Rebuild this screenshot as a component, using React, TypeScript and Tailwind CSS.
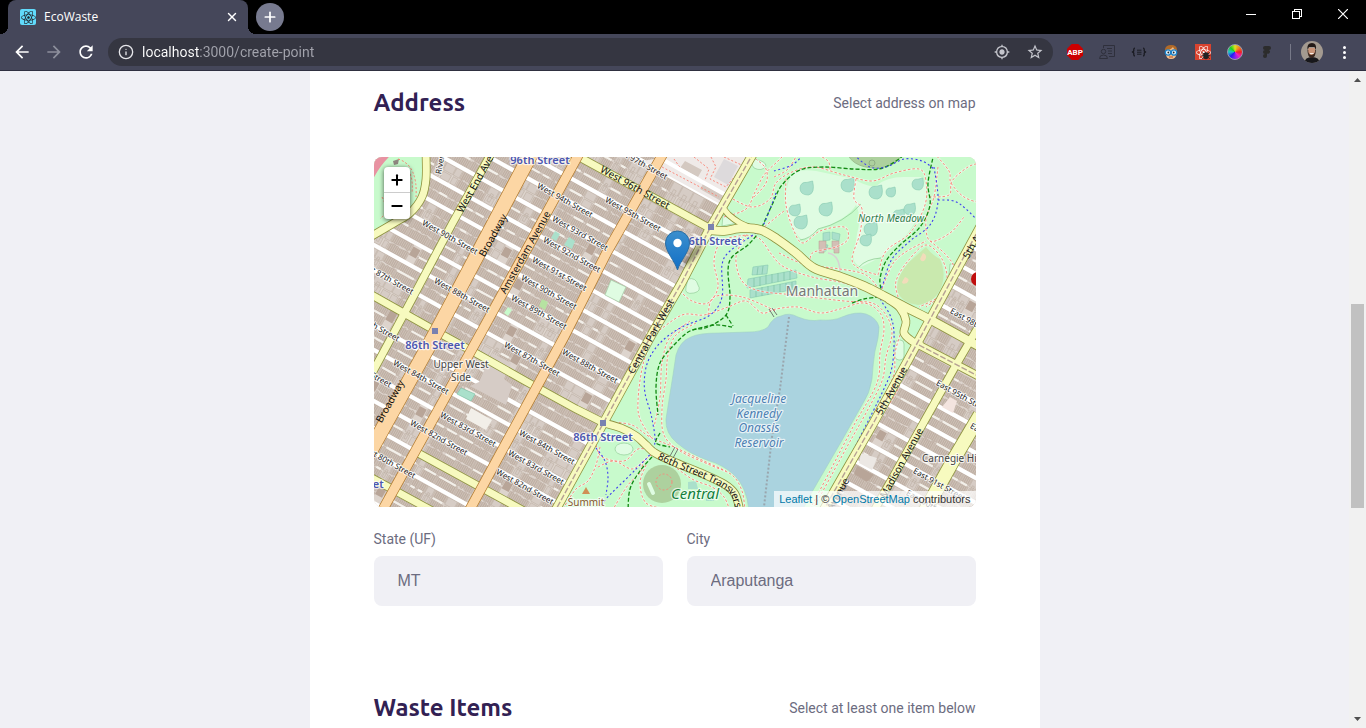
import React from "react";
import { Info, Minus, Plus, X } from "lucide-react";
import { FaReact } from "react-icons/fa";
import { MdOutlineMyLocation, MdRefresh, MdStarBorder, MdArrowBack, MdArrowForward } from "react-icons/md";

type Pt = [number, number];

const SLOPE = 0.555;
const ANGLE = (Math.atan(SLOPE) * 180) / Math.PI;
const COS = Math.cos(Math.atan(SLOPE));
const SIN = Math.sin(Math.atan(SLOPE));

/* Vertical offset of every cross street where it meets the left edge. */
const STREETS = [
  -367, -342, -317, -292, -267, -242, -217, -192, -167, -145, -112, -88, -64, -38, -13, 12, 37, 63, 88, 113, 139, 168,
  193, 219, 244, 271, 296, 321, 346,
];

const parkWest = (y: number) => 378 - y * 0.56;
const parkEast = (y: number) => 646 - y * 0.563;

function buildCity() {
  let seed = 17;
  const rnd = () => {
    seed = (seed * 16807) % 2147483647;
    return seed / 2147483647;
  };
  let houses = "";
  let terraces = "";
  let yards = "";
  let dark = "";
  for (let i = 0; i < STREETS.length; i++) {
    const b = STREETS[i];
    const next = STREETS[i + 1] ?? b + 25;
    const depth = (next - b) * COS;
    const quad = (t: number, v: number, w: number, h: number) => {
      const p = (a: number, c: number) =>
        (a * COS - c * SIN).toFixed(1) + " " + (b + a * SIN + c * COS).toFixed(1);
      return `M${p(t, v)}L${p(t + w, v)}L${p(t + w, v + h)}L${p(t, v + h)}Z`;
    };
    const from = Math.max(-10, (-b - 30) / SIN);
    const to = Math.min(720, (356 - b) / SIN);
    let t = from;
    while (t < to) {
      const x = t * COS;
      const y = b + t * SIN;
      if (x > parkWest(y) + 6 && x < parkEast(y) - 20) {
        t += 4;
        continue;
      }
      const kind = rnd();
      const half = (depth - 5) / 2;
      if (kind < 0.66) {
        const n = 4 + Math.floor(rnd() * 8);
        for (let k = 0; k < n; k++) {
          const d1 = half - 0.2 - rnd() * 1.6;
          const d2 = half - 0.2 - rnd() * 1.6;
          terraces += quad(t + k * 2, 2.5, 2, d1);
          terraces += quad(t + k * 2, depth - 2.5 - d2, 2, d2);
        }
        if (rnd() > 0.5) yards += quad(t + 1, 2.5 + half - 1.2, n * 2 - 3, 2.2);
        t += n * 2 + 0.6;
      } else if (kind < 0.96) {
        const w = 5 + rnd() * 7;
        houses += quad(t, 2.5, w, half - 0.4);
        houses += quad(t + 1, depth - 2.5 - half + 1, w - 1.4, half - 1);
        if (rnd() > 0.5) houses += quad(t + w * 0.35, 5 + half * 0.4, w * 0.3, half);
        t += w + 0.8;
      } else {
        dark += quad(t, 4, 8, half + 1);
        t += 9;
      }
    }
  }
  return { houses, terraces, yards, dark };
}

const city = buildCity();

const line = (pts: Pt[]) => "M" + pts.map((p) => p.join(" ")).join("L");

function curve(pts: Pt[]) {
  let d = `M${pts[0][0]} ${pts[0][1]}`;
  for (let i = 0; i < pts.length - 1; i++) {
    const p0 = pts[Math.max(0, i - 1)];
    const p1 = pts[i];
    const p2 = pts[i + 1];
    const p3 = pts[Math.min(pts.length - 1, i + 2)];
    const c = [p1[0] + (p2[0] - p0[0]) / 6, p1[1] + (p2[1] - p0[1]) / 6, p2[0] - (p3[0] - p1[0]) / 6, p2[1] - (p3[1] - p1[1]) / 6];
    d += `C${c.map((n) => n.toFixed(1)).join(" ")} ${p2[0]} ${p2[1]}`;
  }
  return d;
}

const transverse97 = curve([[335, 73], [350, 74], [368, 71], [387, 73], [403, 82], [422, 96], [440, 111], [467, 120], [490, 129], [510, 139], [533, 151], [557, 163], [606, 190]]);
const spur97 = curve([[347, 48], [355, 58], [366, 66], [378, 71]]);
const spur96 = curve([[514, 142], [526, 151], [532, 164], [530, 176], [538, 184], [548, 189]]);
const street86: Pt[] = [[-4, 137], [67, 177], [107, 199], [153, 225], [202, 252], [230, 266]];
const transverse86 = curve([[230, 266], [247, 271], [262, 279], [272, 288], [281, 296], [300, 305], [327, 316], [350, 327], [361, 337], [366, 354]]);

const YELLOW = [
  { d: curve([[52, -4], [52, 22], [48, 40], [36, 56], [20, 66], [-4, 80]]), w: 7 },
  { d: line([[118, -5], [78, 67], [30, 157], [-4, 220]]), w: 7 },
  { d: line([[196, -5], [337, 72]]), w: 7 },
  { d: line(street86), w: 7 },
  { d: transverse86, w: 7 },
  { d: line([[44, 296], [150, 354]]), w: 7 },
  { d: line([[-4, 320], [62, 356]]), w: 7 },
  { d: transverse97, w: 8 },
  { d: spur97, w: 5 },
  { d: spur96, w: 7 },
  { d: line([[545, 188], [606, 220]]), w: 7 },
  { d: line([[380, -5], [335, 73], [307, 127], [278, 177], [230, 265], [180, 356]]), w: 8 },
  { d: line([[606, 70], [553, 168], [533, 205], [500, 265], [473, 312], [449, 354]]), w: 8 },
  { d: line([[606, 167], [582, 208], [533, 295], [500, 354]]), w: 7 },
  { d: line([[606, 258], [580, 302], [551, 354]]), w: 13 },
];

const ORANGE = [
  { d: line([[158, -5], [64, 172], [-6, 298]]), w: 14 },
  { d: line([[206, -5], [108, 174], [8, 354]]), w: 9 },
  { d: line([[290, -5], [233, 95], [190, 180], [95, 354]]), w: 9 },
];

const RAIL = [
  line([[380, -5], [335, 73], [307, 127], [278, 177], [230, 265], [180, 356]]),
  line([[606, 70], [553, 168], [533, 205], [500, 265], [473, 312], [449, 354]]),
  line([[545, 188], [606, 220]]),
];

const FOOTPATHS: Pt[][] = [
  [[350, 60], [372, 52], [381, 35], [390, 18], [404, 4], [412, -4]],
  [[355, 40], [378, 50], [396, 42], [402, 26], [418, 15], [440, 10], [470, 18], [498, 24], [520, 16], [545, 12], [552, 24], [551, 48], [536, 76], [512, 94], [504, 118]],
  [[412, 22], [412, 48], [420, 74], [429, 86], [446, 74], [470, 70], [474, 82], [462, 90], [440, 95], [436, 102]],
  [[482, 22], [480, 42], [488, 52], [486, 76], [478, 102], [486, 112], [504, 118]],
  [[405, 96], [430, 107], [466, 112], [492, 118], [506, 134]],
  [[560, -4], [575, 14], [577, 26], [590, 40], [606, 46]],
  [[555, 40], [575, 38], [578, 24], [594, 10], [606, 6]],
  [[564, 10], [560, 40], [552, 62], [556, 84], [576, 76], [590, 60]],
  [[556, 84], [572, 98], [580, 112], [572, 134], [552, 150]],
  [[508, 132], [518, 108], [530, 96], [552, 84]],
  [[524, 140], [522, 124], [534, 104], [552, 88], [568, 102], [573, 124], [564, 140], [545, 150]],
  [[306, 134], [318, 144], [334, 146], [344, 130], [340, 104], [348, 84], [372, 78]],
  [[372, 78], [386, 82], [398, 98], [410, 110], [438, 120], [470, 126], [502, 138]],
  [[372, 78], [362, 100], [368, 124], [386, 134], [420, 138], [470, 144], [498, 146], [512, 158], [518, 176], [512, 200], [508, 224], [492, 256], [474, 288], [450, 332], [438, 354]],
  [[282, 176], [308, 158], [330, 158], [354, 150], [372, 144], [388, 156], [402, 152], [424, 150], [446, 156], [466, 152], [490, 146], [506, 156], [510, 172], [506, 196], [503, 226], [480, 268], [456, 314], [436, 352]],
  [[322, 166], [302, 178], [294, 198], [292, 222], [288, 252], [290, 278], [306, 294], [336, 308], [358, 318], [368, 334], [371, 354]],
  [[316, 164], [296, 180], [288, 206], [286, 240], [280, 270]],
  [[290, 165], [276, 188], [268, 212], [264, 244], [266, 262], [278, 282]],
  [[236, 265], [258, 268], [276, 280], [300, 290], [330, 304], [352, 314]],
  [[222, 288], [228, 300], [250, 304], [264, 292], [278, 294]],
  [[226, 290], [222, 308], [214, 324], [202, 332], [190, 350]],
  [[224, 310], [240, 304], [258, 312], [272, 302]],
  [[238, 354], [254, 328], [266, 316], [270, 304], [280, 296]],
  [[272, 308], [266, 326], [272, 346], [292, 352]],
  [[296, 306], [318, 322], [338, 330], [350, 340], [356, 354]],
  [[540, 196], [530, 210], [524, 232], [506, 262], [474, 316], [452, 352]],
  [[526, 178], [521, 196], [519, 220], [500, 256]],
  [[400, 20], [414, 12], [424, -4]],
  [[440, -4], [454, 4], [456, 14]],
  [[380, 40], [392, 26], [392, 12], [382, 2]],
  [[410, 54], [400, 62], [390, 70]],
  [[334, 158], [340, 140], [368, 140], [402, 154]],
];

const BRIDLE: Pt[][] = [
  [[388, 70], [398, 48], [408, 28], [426, 13], [450, 10], [480, 12], [505, 12], [522, 4], [532, -4]],
  [[560, -4], [554, 26], [556, 48], [546, 70], [526, 88], [512, 104], [506, 122], [508, 136]],
  [[386, 74], [374, 88], [358, 100], [354, 114], [356, 140], [352, 158], [334, 170], [316, 174], [300, 188], [286, 206], [282, 230], [284, 258]],
  [[478, 146], [490, 142], [504, 140]],
  [[352, 158], [359, 169]],
  [[358, 170], [340, 168], [318, 173]],
  [[286, 276], [282, 286], [296, 290]],
  [[278, 300], [266, 314], [256, 332], [254, 354]],
];

const BIKE: Pt[][] = [
  [[402, 36], [396, 52], [388, 70], [376, 80], [356, 94], [348, 108], [348, 140], [336, 158], [308, 170], [288, 184], [276, 200], [271, 216], [271, 236], [278, 262], [280, 290], [262, 312], [232, 342], [226, 354]],
  [[560, 10], [564, 44], [556, 68], [536, 84], [518, 102], [510, 124], [506, 140], [516, 158], [520, 176], [518, 210], [508, 236], [486, 280], [456, 340], [448, 354]],
  [[480, -2], [496, 10], [512, 10], [530, 2], [548, 4], [560, 12]],
  [[564, 43], [580, 44], [592, 52], [606, 66]],
  [[400, 14], [418, 8], [430, -3]],
  [[222, 291], [231, 304], [234, 320], [232, 338]],
];

const LAKE =
  "M317 180Q325 176 345 176L374 175Q388 175 394 170Q399 160 407 159Q415 155 424 160Q436 165 446 163Q460 164 468 160Q482 154 492 157Q503 161 505 170Q505 180 501 194Q499 206 498 222Q496 236 488 248L467 285L438 335L428 354H375Q373 330 360 318Q350 308 333 303Q316 297 303 286Q291 276 292 262L299 218L302 198Q306 184 317 180Z";

const PONDS: [number, number, number][] = [
  [433, 31, 7], [474, 28, 7], [502, 35, 7], [517, 35, 5], [544, 27, 6], [452, 52, 7], [421, 53, 6], [427, 65, 7], [497, 72, 7], [492, 83, 6], [525, 58, 6], [536, 52, 6],
];

type Label = { t: string; x: number; y: number; end?: boolean };

const STREET_LABELS: Label[] = [
  { t: "West 97th Street", x: 293, y: 20, end: true },
  { t: "West 95th Street", x: 232, y: 42 },
  { t: "West 94th Street", x: 164, y: 28 },
  { t: "West 93rd Street", x: 179, y: 61 },
  { t: "West 92nd Street", x: 170, y: 82 },
  { t: "West 91st Street", x: 159, y: 102 },
  { t: "West 90th Street", x: 148, y: 120 },
  { t: "West 90th Street", x: 49, y: 65 },
  { t: "West 89th Street", x: 138, y: 140 },
  { t: "West 88th Street", x: 61, y: 123 },
  { t: "West 87th Street", x: 39, y: 135, end: true },
  { t: "West 85th Street", x: 25, y: 182, end: true },
  { t: "West 84th Street", x: 20, y: 205 },
  { t: "West 83rd Street", x: 17, y: 228, end: true },
  { t: "West 83rd Street", x: 67, y: 257 },
  { t: "West 82nd Street", x: 37, y: 265 },
  { t: "West 80th Street", x: 41, y: 319, end: true },
  { t: "West 87th Street", x: 131, y: 187 },
  { t: "West 88th Street", x: 189, y: 194 },
  { t: "West 84th Street", x: 146, y: 275 },
  { t: "West 83rd Street", x: 135, y: 295 },
  { t: "West 82nd Street", x: 123, y: 314 },
  { t: "East 98th Street", x: 577, y: 153 },
  { t: "East 95th Street", x: 563, y: 225 },
  { t: "East 93rd Street", x: 597, y: 268 },
  { t: "East 91st Street", x: 540, y: 313 },
  { t: "East 90th Street", x: 533, y: 335 },
];

const AVENUE_LABELS: Label[] = [
  { t: "West End Avenue", x: 86, y: 55 },
  { t: "Broadway", x: 108, y: 99 },
  { t: "Amsterdam Avenue", x: 129, y: 136 },
  { t: "Central Park West", x: 257, y: 216 },
  { t: "Broadway", x: 5, y: 265 },
  { t: "5th Avenue", x: 592, y: 101 },
  { t: "5th Avenue", x: 505, y: 257 },
  { t: "5th Avenue", x: 473, y: 322, end: true },
  { t: "Madison Avenue", x: 547, y: 272, end: true },
];

function CityMap() {
  return (
    <svg
      viewBox="0 0 602 350"
      preserveAspectRatio="xMidYMid slice"
      className="block h-full w-full font-['Noto_Sans',sans-serif]"
      role="img"
      aria-label="Street map of the Upper West Side and Central Park"
    >
      <defs>
        <filter id="pin-shadow" x="-50%" y="-50%" width="200%" height="200%">
          <feGaussianBlur stdDeviation="2" />
        </filter>
        <linearGradient id="pin" x1="0" y1="0" x2="0" y2="1">
          <stop offset="0" stopColor="#3b8fcd" />
          <stop offset="1" stopColor="#126fc6" />
        </linearGradient>
        <path id="transverse-86" d={transverse86} />
      </defs>
      <rect width="602" height="350" fill="#ddd4cd" />
      <path d={city.terraces} fill="#cdc0b6" stroke="#b8a99c" strokeWidth="0.5" />
      <path d={city.houses} fill="#d6ccc5" stroke="#bcaea2" strokeWidth="0.6" />
      <path d={city.yards} fill="#f2efe9" />
      <path d={city.dark} fill="#b8a598" />
      <g stroke="#ffffff" strokeWidth="4">
        {STREETS.filter((b) => ![-112, 139, 321].includes(b)).map((b) => (
          <path key={b} d={`M-5 ${b - 5 * SLOPE}L610 ${b + 610 * SLOPE}`} />
        ))}
      </g>

      {/* open ground north of 96th Street */}
      <path d="M292 0H375L346 47L268 4Z" fill="#efeae8" />
      <path d="M350 2L364 9L354 28L340 20Z" fill="#dddadc" />
      <path d="M311 4L328 13L324 20L306 11ZM329 27L350 38L347 44L326 32Z" fill="#d4c9c1" />
      <g fill="none" stroke="#fa8072" strokeWidth="0.9" strokeDasharray="2 2">
        <path d="M288 10L345 40M320 0L335 12L330 26M337 0L342 10L336 22L352 30L370 8M300 2L310 16L330 24M350 0L372 10" />
      </g>
      <path d="M263 -12L300 9L350 37" fill="none" stroke="#ffffff" strokeWidth="4" />

      {/* small plots inside the blocks */}
      <path d="M105 225L118 196L137 206L130 222L138 228L132 248L96 229Z" fill="#d6ccc6" />
      <path d="M97 251L118 263L112 273L92 262Z" fill="#f2efe9" />
      <path d="M87 231L101 237L97 244L83 237Z" fill="#aae0cb" stroke="#7cc4aa" strokeWidth="0.6" />
      <path d="M181 74L186 77L182 84L177 81ZM195 80L201 84L198 92L190 88Z" fill="#aae0cb" />
      <path d="M168 142L174 145L171 153L165 149Z" fill="#b6e3a1" />
      <path d="M237 123L252 130L245 145L231 138Z" fill="#dffce2" stroke="#a5cfa9" strokeWidth="0.7" />
      <path d="M134 150L138 153L134 159L130 156Z" fill="#c8facc" />
      <path d="M487 296L503 301L498 313L485 306Z" fill="#ece8e4" />
      <path d="M483 309L500 318L493 325L480 317Z" fill="#b8a598" />
      <path d="M576 240L583 244L579 256L568 250Z" fill="#f3e4df" />

      {/* parks */}
      <path d="M-2 -2H49Q51 30 43 45Q32 60 -2 74Z" fill="#c8facc" />
      <path d="M-2 -2H17Q6 8 -2 24Z" fill="#e892a2" />
      <path d="M19 4L25 2L24 7L20 8Z" fill="#8e8680" />
      <path d="M8 40Q16 54 6 62M24 2Q44 8 42 40M32 10Q40 20 38 36" fill="none" stroke="#fa8072" strokeDasharray="2 2" />
      <path d="M380 -4L335 73L278 177L180 354H449L500 265L553 168L606 72V-4Z" fill="#c8facc" />
      <path
        d="M420 15Q430 12 442 14L480 22Q492 30 502 29Q512 20 530 20L547 20Q553 26 552 36Q552 52 545 60L533 77L507 100L487 110Q478 106 480 98L483 77Q488 60 482 48Q474 62 443 73Q434 84 427 82Q412 66 412 44Q412 24 420 15Z"
        fill="#dffce2"
      />
      <path d="M426 83Q436 82 444 72Q470 66 487 47M485 110Q492 102 507 101" fill="none" stroke="#8fce94" strokeWidth="0.8" />
      <ellipse cx="501" cy="-5" rx="27" ry="16" fill="#add19e" stroke="#9bbf8e" />
      <circle cx="498" cy="6" r="3" fill="none" stroke="#8fae85" />
      <g fill="#aae0cb" stroke="#86c9b0" strokeWidth="0.6">
        {PONDS.map(([x, y, r]) => (
          <path
            key={`${x}-${y}`}
            d={`M${x - r} ${y}Q${x - r * 0.9} ${y - r * 0.9} ${x} ${y - r * 0.8}L${x + r * 0.8} ${y - r}Q${x + r * 1.2} ${y + r * 0.8} ${x + r * 0.2} ${y + r}Q${x - r} ${y + r} ${x - r} ${y}Z`}
          />
        ))}
        <path d="M379 110L394 108L393 117L378 118ZM374 122L422 113L423 121L373 131ZM376 133L422 124L422 132L376 141Z" />
        <path d="M449 76L456 75V83L449 84ZM458 75L466 77L465 84L458 82ZM447 87L454 88L452 94H446Z" />
      </g>
      <path d="M384 110L383 118M389 109L388 117M380 121L380 130M386 120L386 129M392 118L392 127M398 117L398 126M404 116L404 125M410 115L410 124M416 114L416 123M382 132V140M388 130V139M394 129V138M400 128V136M406 127V135M412 126V134M418 125V133" stroke="#7cbfa5" strokeWidth="0.7" />
      <path d="M445 84H452V91H458V84H465V96H460V92H450V96H445Z" fill="#d3bfb5" stroke="#b59d90" strokeWidth="0.5" />
      <path d="M454 96Q466 98 466 116" fill="none" stroke="#d9d0d4" strokeWidth="1.6" />
      <path d="M552 90Q558 98 566 102Q572 116 568 128Q562 146 544 148Q528 146 523 134Q522 120 534 106Z" fill="#c9e9ae" />
      <path d="M549 96Q554 98 551 103Q548 106 546 102ZM531 120Q537 122 533 126Q528 128 528 125Z" fill="#f2dcba" />
      <g fill="#dffce2" stroke="#93cf99" strokeWidth="0.7">
        <path d="M380 2Q392 4 392 9Q388 15 380 11Q376 6 380 2Z" />
        <path d="M314 122Q322 120 324 128Q328 134 320 136Q310 138 312 130Z" />
        <ellipse cx="250" cy="292" rx="9" ry="6" />
        <rect x="521" y="183" width="9" height="20" rx="4" />
        <path d="M576 107H581L580 120L575 118Z" />
        <path d="M349 58L364 66L348 69Z" />
      </g>
      <circle cx="288" cy="327" r="19" fill="#add19e" />
      <path d="M275 327L279 336" stroke="#dffce2" strokeWidth="4" strokeLinecap="round" />
      <path d="M314 325L322 324L324 332L314 332ZM332 334Q340 334 340 344H332Z" fill="#aae0cb" />

      <path d={LAKE} fill="#aad3df" stroke="#9fd0c4" strokeWidth="0.6" />
      <path d="M415 160L406 232L398 280L390 350" fill="none" stroke="#9aa6ae" strokeWidth="2" strokeDasharray="2 2" />

      <g fill="none" strokeLinejoin="round">
        {FOOTPATHS.map((p, i) => (
          <path key={i} d={curve(p)} stroke="#ffffff" strokeOpacity="0.45" strokeWidth="2.2" />
        ))}
        {FOOTPATHS.map((p, i) => (
          <path key={i} d={curve(p)} stroke="#f98a7c" strokeWidth="1" strokeDasharray="2.5 2" />
        ))}
        {BRIDLE.map((p, i) => (
          <path key={i} d={curve(p)} stroke="#128a12" strokeWidth="1.3" strokeDasharray="4 2" />
        ))}
        {BIKE.map((p, i) => (
          <path key={i} d={curve(p)} stroke="#3d3df0" strokeWidth="1.1" strokeDasharray="2 2.5" />
        ))}
        <circle cx="290" cy="325" r="8" stroke="#f98a7c" strokeDasharray="2 2" />
      </g>

      {/* main roads: casings first, fills above */}
      <g fill="none">
        {YELLOW.map((r, i) => (
          <path key={i} d={r.d} stroke="#8f9440" strokeWidth={r.w + 1.6} />
        ))}
        {YELLOW.map((r, i) => (
          <path key={i} d={r.d} stroke="#f7fabf" strokeWidth={r.w} />
        ))}
        {ORANGE.map((r, i) => (
          <path key={i} d={r.d} stroke="#b27a2c" strokeWidth={r.w + 1.4} />
        ))}
        {ORANGE.map((r, i) => (
          <path key={i} d={r.d} stroke="#fcd6a4" strokeWidth={r.w} />
        ))}
        {RAIL.map((d, i) => (
          <path key={i} d={d} stroke="#b5a093" strokeWidth="1.4" strokeDasharray="6 2" />
        ))}
      </g>
      <path d="M301 290L296 299M304 292L299 301M395 152L400 160M398 151L403 158" stroke="#5a5a5a" strokeWidth="0.8" />

      <g fill="#7981b0">
        <rect x="58" y="171" width="6" height="6" />
        <rect x="226" y="263" width="6" height="6" />
        <rect x="334" y="67" width="6" height="6" />
      </g>
      <path d="M212 330L216 337H208Z" fill="#d08f55" />
      <circle cx="604" cy="122" r="7" fill="#c00d0d" />

      <g fill="#222222" stroke="#ffffff" strokeOpacity="0.75" strokeWidth="2" strokeLinejoin="round" paintOrder="stroke">
        <g fontSize="8">
          {STREET_LABELS.map((l, i) => (
            <text key={i} transform={`translate(${l.x} ${l.y}) rotate(${ANGLE})`} dy="3" textAnchor={l.end ? "end" : "start"}>
              {l.t}
            </text>
          ))}
        </g>
        <text fontSize="8" transform="translate(64 17) rotate(-80)" dy="3">Riverside Drive</text>
      </g>
      <g fill="#111111" fontSize="10">
        {AVENUE_LABELS.map((l, i) => (
          <text key={i} transform={`translate(${l.x} ${l.y}) rotate(-60.8)`} dy="3" textAnchor={l.end ? "end" : "start"}>
            {l.t}
          </text>
        ))}
        <text transform={`translate(227 12) rotate(${ANGLE})`} dy="3">West 96th Street</text>
        <text dy="4">
          <textPath href="#transverse-86" startOffset="65">86th Street Transverse</textPath>
        </text>
      </g>
      <g stroke="#ffffff" strokeOpacity="0.7" strokeWidth="2.4" strokeLinejoin="round" paintOrder="stroke" textAnchor="middle">
        <g fill="#4b56b0" fontSize="11" fontWeight="600">
          <text x="166" y="7">96th Street</text>
          <text x="338" y="88">96th Street</text>
          <text x="61" y="192">86th Street</text>
          <text x="229" y="284">86th Street</text>
          <text x="-20" y="331">79th Street</text>
        </g>
        <g fill="#444444" fontSize="10">
          <text x="87" y="211">Upper West</text>
          <text x="87" y="224">Side</text>
          <text x="548" y="305" textAnchor="start">Carnegie Hill</text>
        </g>
        <text x="448" y="139" fontSize="14" fill="#777777">Manhattan</text>
        <text x="517" y="65" fontSize="10" fontStyle="italic" fill="#2e7d4a">North Meadow</text>
        <text x="321" y="342" fontSize="15" fontStyle="italic" fill="#14803c">Central</text>
        <text x="212" y="349" fontSize="10" fill="#86562c">Summit</text>
        <g fontSize="12" fontStyle="italic" fill="#4d80b3">
          <text x="385" y="246">Jacqueline</text>
          <text x="385" y="261">Kennedy</text>
          <text x="385" y="275">Onassis</text>
          <text x="385" y="290">Reservoir</text>
        </g>
      </g>

      <path d="M304 113L322 90Q330 82 326 94Q320 104 304 113Z" fill="#000000" fillOpacity="0.45" filter="url(#pin-shadow)" />
      <path
        d="M303.500 113C301 104 291.500 95 291.500 86A12 12 0 0 1 315.500 86C315.500 95 306 104 303.500 113Z"
        fill="url(#pin)"
        stroke="#2a6da3"
      />
      <circle cx="303.500" cy="86" r="4.200" fill="#ffffff" />
    </svg>
  );
}

function Extensions() {
  return (
    <div className="flex items-center gap-4">
      <button aria-label="Ad blocker" className="size-4">
        <svg viewBox="0 0 16 16" className="size-4">
          <path d="M4.700 0H11.300L16 4.700V11.300L11.300 16H4.700L0 11.300V4.700Z" fill="#cc0000" />
          <text x="8" y="11" textAnchor="middle" fontSize="8" fontWeight="700" fill="#ffffff" className="font-['Roboto',sans-serif]">ABP</text>
        </svg>
      </button>
      <button aria-label="Contact cards" className="size-4">
        <svg viewBox="0 0 16 16" className="size-4" fill="none" stroke="#2f303c">
          <path d="M4.500 4V1.500H15.500V12.500H10M8 4.500H13M9 7H13M9 9.500H13" />
          <circle cx="4.500" cy="7.500" r="2.200" />
          <path d="M0.500 14.500Q0.500 11 4.500 11Q8.500 11 8.500 14.500Z" />
        </svg>
      </button>
      <button aria-label="JSON viewer" className="size-4">
        <svg viewBox="0 0 16 16" className="size-4" fill="none" stroke="#16171d" strokeWidth="1.200">
          <path d="M4 4Q2.800 4 2.800 5.300V7L1.500 8L2.800 9V10.700Q2.800 12 4 12M12 4Q13.200 4 13.200 5.300V7L14.500 8L13.200 9V10.700Q13.200 12 12 12" />
          <path d="M6 6.200H10.500M6 8.200H10.500M6 10.200H10.500" strokeWidth="0.900" />
        </svg>
      </button>
      <button aria-label="Profile tool" className="size-4">
        <svg viewBox="0 0 16 16" className="size-4">
          <path d="M2 9V5Q3 1 8 1Q14 1 14 6V10Z" fill="#b06a28" />
          <path d="M3 6Q8 6 10 3Q11 6 13.500 6V10Q13 15 8 15Q3 15 3 10Z" fill="#f6c08a" />
          <circle cx="5" cy="8.500" r="2.700" fill="#e9f7ff" stroke="#1a80c8" strokeWidth="1.300" />
          <circle cx="11" cy="8.500" r="2.700" fill="#e9f7ff" stroke="#1a80c8" strokeWidth="1.300" />
          <circle cx="5.300" cy="8.500" r="0.900" fill="#222222" />
          <circle cx="10.700" cy="8.500" r="0.900" fill="#222222" />
          <path d="M6 13H10" stroke="#b3532e" />
        </svg>
      </button>
      <button aria-label="React developer tools" className="relative flex size-4 items-center justify-center bg-[#d9432f]">
        <FaReact className="size-[15px] text-white" />
        <svg viewBox="0 0 8 8" className="absolute bottom-0 right-0 size-2.5" fill="#222222" stroke="#222222">
          <ellipse cx="4" cy="4.500" rx="1.700" ry="2.300" />
          <path d="M1 2L7 7M7 2L1 7M0.500 4.500H7.500" strokeWidth="0.700" />
        </svg>
      </button>
      <button
        aria-label="Color picker"
        className="size-4 rounded-full border border-[#9a9bb0] bg-[conic-gradient(#e0e020,#f08020,#f02020,#f020c0,#8020f0,#2020f0,#20c8c8,#20d020,#e0e020)]"
      />
      <button aria-label="Design tool" className="size-4">
        <svg viewBox="0 0 16 16" className="size-4" fill="#2c2c2c">
          <path d="M6 2H10A2 2 0 0 1 10 6A2 2 0 1 1 8 9.500V12A2 2 0 1 1 6 10A2 2 0 0 1 6 6A2 2 0 0 1 6 2Z" />
        </svg>
      </button>
    </div>
  );
}

function BrowserChrome() {
  return (
    <header className="shrink-0 bg-black font-['Open_Sans',sans-serif]">
      <div className="flex h-[34px] items-stretch">
        <div className="relative ml-2 flex w-60 items-center rounded-t-lg bg-[#45475a] pl-3 pr-[9px]">
          <span className="flex size-4 items-center justify-center rounded-xs bg-[#61dafb]">
            <FaReact className="size-[15px] text-[#20232a]" />
          </span>
          <span className="ml-2 flex-1 text-[12px] text-white">EcoWaste</span>
          <button aria-label="Close tab" className="text-white">
            <X className="size-3.5" strokeWidth={2.4} />
          </button>
          <span className="absolute -right-2 bottom-0 size-2 bg-[radial-gradient(circle_at_100%_0,#000000_8px,#45475a_8px)]" />
          <span className="absolute -left-2 bottom-0 size-2 bg-[radial-gradient(circle_at_0_0,#000000_8px,#45475a_8px)]" />
        </div>
        <button aria-label="New tab" className="ml-2 mt-[3px] flex size-7 items-center justify-center rounded-full bg-[#777a8f] text-white">
          <Plus className="size-4" strokeWidth={2.6} />
        </button>
        <div className="ml-auto flex h-7 items-center text-white">
          <button aria-label="Minimize" className="flex w-[46px] justify-center">
            <svg viewBox="0 0 10 10" className="size-2.5" fill="none" stroke="currentColor" shapeRendering="crispEdges">
              <path d="M0 5.500H10" />
            </svg>
          </button>
          <button aria-label="Restore" className="flex w-[46px] justify-center">
            <svg viewBox="0 0 10 10" className="size-2.5" fill="none" stroke="currentColor" shapeRendering="crispEdges">
              <path d="M0.500 2.500H7.500V9.500H0.500ZM2.500 2.500V0.500H9.500V7.500H7.500" />
            </svg>
          </button>
          <button aria-label="Close window" className="flex w-[46px] justify-center">
            <svg viewBox="0 0 10 10" className="size-2.5" fill="none" stroke="currentColor" strokeWidth="1.200">
              <path d="M0 0L10 10M10 0L0 10" />
            </svg>
          </button>
        </div>
      </div>
      <div className="flex h-[37px] items-center border-b border-[#2f3040] bg-[#45475a] pl-3">
        <div className="flex items-center gap-3 text-white">
          <button aria-label="Back">
            <MdArrowBack className="size-5" />
          </button>
          <button aria-label="Forward" className="text-[#8d8f9c]">
            <MdArrowForward className="size-5" />
          </button>
          <button aria-label="Reload">
            <MdRefresh className="size-5" />
          </button>
        </div>
        <div className="ml-3 flex h-7 flex-1 items-center rounded-full bg-[#353641] pl-2.5 pr-[9px] text-[#c4c5cc]">
          <Info className="size-4 text-[#e6e6ea]" />
          <input
            aria-label="Address bar"
            defaultValue="localhost:3000/create-point"
            className="ml-2 min-w-0 flex-1 bg-[linear-gradient(90deg,#ffffff_57px,#a3a4ad_57px)] bg-clip-text font-['Roboto',sans-serif] text-[14px] text-transparent outline-none"
          />
          <div className="flex items-center gap-4">
            <button aria-label="Location">
              <MdOutlineMyLocation className="size-4" />
            </button>
            <button aria-label="Bookmark">
              <MdStarBorder className="size-[18px]" />
            </button>
          </div>
        </div>
        <div className="ml-[14px] flex items-center">
          <Extensions />
          <span className="ml-[15px] h-4 w-px bg-[#777988]" />
          <button aria-label="Account" className="ml-[10px] size-[22px] overflow-hidden rounded-full">
            <svg viewBox="0 0 22 22" className="size-[22px]">
              <rect width="22" height="22" fill="#a39a90" />
              <path d="M3 22Q4 16 11 16Q18 16 19 22Z" fill="#17171b" />
              <path d="M6.500 9Q6.500 16.500 10.500 17Q15 16.500 14.800 9Z" fill="#3a261d" />
              <path d="M7.300 7H14V11Q13 14 10.700 14Q8 14 7.300 11Z" fill="#c99478" />
              <path d="M6.500 9Q5.500 2 11 2Q16 2 14.900 9L13.500 6H8Z" fill="#231a17" />
              <path d="M9 12.500H12.500" stroke="#f5eee8" />
            </svg>
          </button>
          <button aria-label="Menu" className="ml-[13px] mr-[14px] flex w-4 flex-col items-center gap-0.5">
            <span className="size-[3px] rounded-full bg-white" />
            <span className="size-[3px] rounded-full bg-white" />
            <span className="size-[3px] rounded-full bg-white" />
          </button>
        </div>
      </div>
    </header>
  );
}

function SectionHeader({ title, hint }: { title: string; hint: string }) {
  return (
    <div className="flex h-7 items-center justify-between">
      <h2 className="font-['Ubuntu','Noto_Sans',sans-serif] text-[24px] font-bold leading-7 text-[#322153]">{title}</h2>
      <span className="text-sm text-[#6c6c80]">{hint}</span>
    </div>
  );
}

function SelectField({ id, label, value }: { id: string; label: string; value: string }) {
  return (
    <div className="flex flex-1 flex-col gap-2">
      <label htmlFor={id} className="text-sm leading-[17px] text-[#6c6c80]">
        {label}
      </label>
      <select
        id={id}
        defaultValue={value}
        className="h-[50px] w-full appearance-none rounded-lg bg-[#f0f0f5] px-6 font-['Liberation_Sans',sans-serif] text-base text-[#6c6c80]"
      >
        <option>{value}</option>
      </select>
    </div>
  );
}

function Scrollbar() {
  return (
    <div className="flex w-[17px] shrink-0 flex-col items-center bg-[#f1f1f1]" aria-hidden="true">
      <svg viewBox="0 0 17 17" className="size-[17px] shrink-0" fill="#505050">
        <path d="M5 11L8.500 7L12 11Z" />
      </svg>
      <div className="flex w-full flex-1 flex-col px-0.5">
        <div className="grow-[216]" />
        <div className="grow-[204] bg-[#c1c1c1]" />
        <div className="grow-[203]" />
      </div>
      <svg viewBox="0 0 17 17" className="size-[17px] shrink-0" fill="#505050">
        <path d="M5 6L8.500 10L12 6Z" />
      </svg>
    </div>
  );
}

export default function App() {
  return (
    <div className="flex h-screen flex-col overflow-hidden bg-[#f0f0f5] font-['Roboto',sans-serif]">
      <BrowserChrome />
      <div className="flex min-h-0 flex-1">
        <main className="min-w-0 flex-1 overflow-hidden">
          <form className="mx-auto min-h-full max-w-[730px] bg-white px-16 pt-[18px]">
            <section>
              <SectionHeader title="Address" hint="Select address on map" />
              <div className="relative mt-10 h-[350px] overflow-hidden rounded-lg">
                <CityMap />
                <div className="absolute left-2.5 top-2.5 flex flex-col overflow-hidden rounded-sm bg-white text-black shadow-[0_1px_5px_rgba(0,0,0,0.65)]">
                  <button type="button" aria-label="Zoom in" className="flex size-[26px] items-center justify-center border-b border-[#cccccc]">
                    <Plus className="size-4" strokeWidth={3} />
                  </button>
                  <button type="button" aria-label="Zoom out" className="flex size-[26px] items-center justify-center">
                    <Minus className="size-4" strokeWidth={3} />
                  </button>
                </div>
                <div className="absolute bottom-0 right-0 bg-white/70 px-[5px] font-['Liberation_Sans',sans-serif] text-[11px] leading-4 text-[#333333]">
                  <a href="#leaflet" className="text-[#0078a8]">Leaflet</a> | ©{" "}
                  <a href="#osm" className="text-[#0078a8]">OpenStreetMap</a> contributors
                </div>
              </div>
              <div className="mt-6 flex gap-6">
                <SelectField id="uf" label="State (UF)" value="MT" />
                <SelectField id="city" label="City" value="Araputanga" />
              </div>
            </section>
            <section className="mt-[88px]">
              <SectionHeader title="Waste Items" hint="Select at least one item below" />
            </section>
          </form>
        </main>
        <Scrollbar />
      </div>
    </div>
  );
}
